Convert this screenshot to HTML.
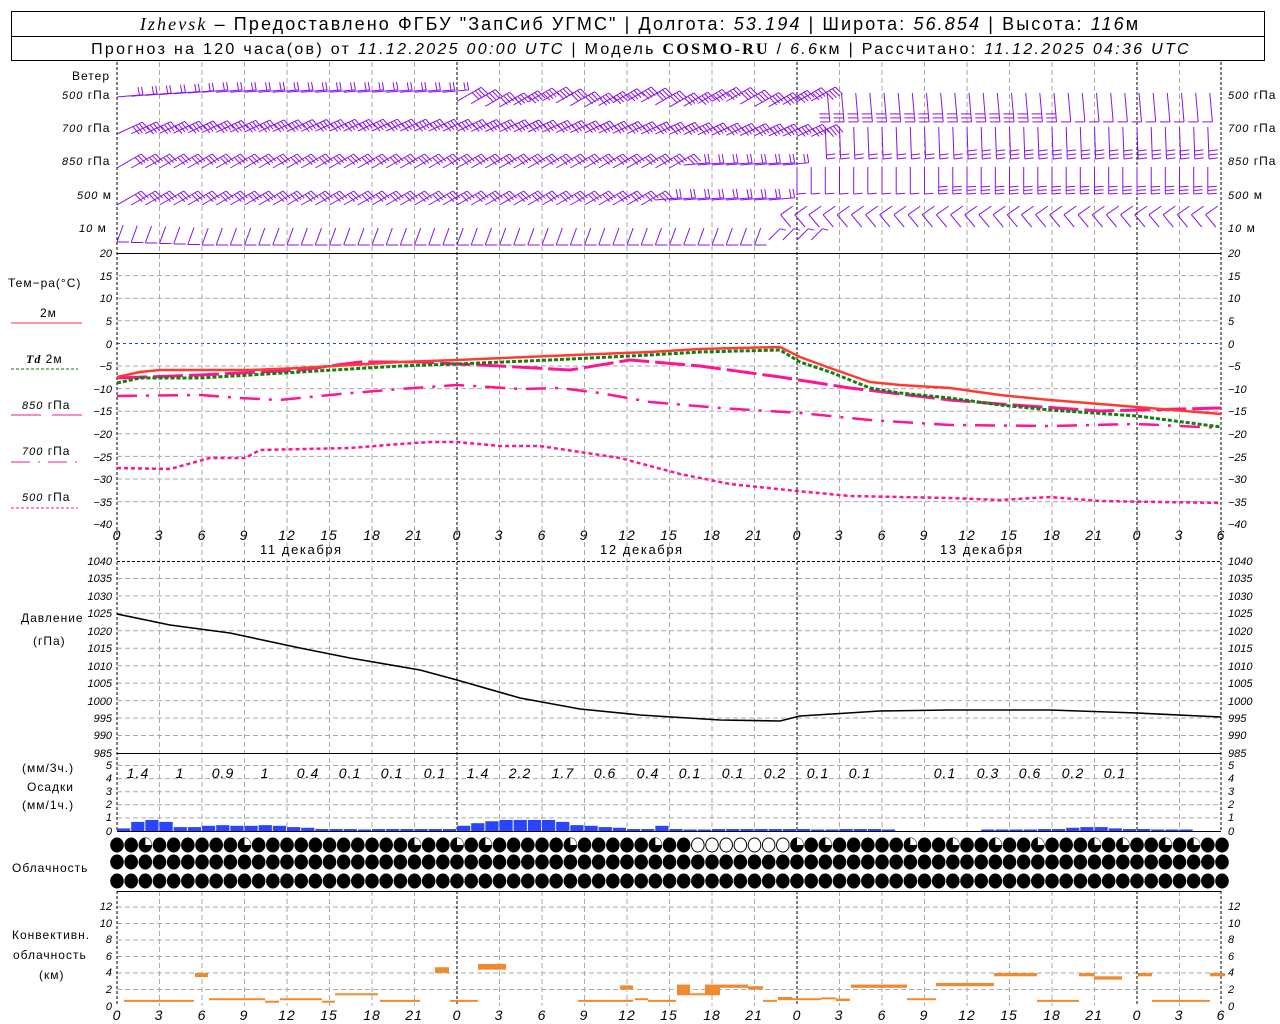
<!DOCTYPE html>
<html><head><meta charset="utf-8"><style>
html,body{margin:0;padding:0;background:#fff;}
svg{display:block;font-family:"Liberation Sans",sans-serif;}
.t{font-size:12px;fill:#000;letter-spacing:1px}
.n{font-size:11px;font-style:italic;fill:#000}
.nr{font-size:11px;font-style:italic;fill:#000;text-anchor:end}
.p{font-size:14px;font-style:italic;fill:#000;text-anchor:middle;letter-spacing:1px}
.x{font-size:14px;font-style:italic;fill:#000;text-anchor:middle;letter-spacing:1px}
</style></head><body>
<svg id="s" width="1280" height="1024" viewBox="0 0 1280 1024" xmlns="http://www.w3.org/2000/svg">
<rect x="11.5" y="11.5" width="1253" height="49" fill="none" stroke="#000"/>
<line x1="11" y1="36.5" x2="1265" y2="36.5" stroke="#000"/>
<text x="640" y="30" text-anchor="middle" style="font-size:18px;letter-spacing:2.1px"><tspan font-style="italic" font-family="Liberation Serif">Izhevsk</tspan> – Предоставлено ФГБУ "ЗапСиб УГМС" | Долгота: <tspan font-style="italic">53.194</tspan> | Широта: <tspan font-style="italic">56.854</tspan> | Высота: <tspan font-style="italic">116</tspan>м</text>
<text x="641" y="54" text-anchor="middle" style="font-size:16px;letter-spacing:2.3px">Прогноз на 120 часа(ов) от <tspan font-style="italic">11.12.2025 00:00 UTC</tspan>  | Модель <tspan font-weight="bold" font-family="Liberation Serif">COSMO-RU</tspan> / <tspan font-style="italic">6.6</tspan>км | Рассчитано: <tspan font-style="italic">11.12.2025 04:36 UTC</tspan></text>
<g id="g"></g>
<text class="t" x="72" y="80">Ветер</text>
<text class="t" x="62" y="99"><tspan font-style="italic" font-size="11">500</tspan> гПа</text>
<text class="t" x="62" y="132"><tspan font-style="italic" font-size="11">700</tspan> гПа</text>
<text class="t" x="62" y="165"><tspan font-style="italic" font-size="11">850</tspan> гПа</text>
<text class="t" x="77" y="199"><tspan font-style="italic" font-size="11">500</tspan> м</text>
<text class="t" x="79" y="232"><tspan font-style="italic" font-size="11">10</tspan>   м</text>
<text class="t" x="1228" y="99"><tspan font-style="italic" font-size="11">500</tspan> гПа</text>
<text class="t" x="1228" y="132"><tspan font-style="italic" font-size="11">700</tspan> гПа</text>
<text class="t" x="1228" y="165"><tspan font-style="italic" font-size="11">850</tspan> гПа</text>
<text class="t" x="1228" y="199"><tspan font-style="italic" font-size="11">500</tspan> м</text>
<text class="t" x="1228" y="232"><tspan font-style="italic" font-size="11">10</tspan>   м</text>
<text class="t" x="8" y="287">Тем−ра(°С)</text>
<text class="t" x="40" y="317">2м</text>
<line x1="11" y1="323" x2="82" y2="323" stroke="#ff3333"/>
<text class="t" x="26" y="363"><tspan font-style="italic" font-weight="bold" font-family="Liberation Serif">Td</tspan>  2м</text>
<line x1="11" y1="369" x2="78" y2="369" stroke="#107010" stroke-dasharray="3,2"/>
<text class="t" x="22" y="409"><tspan font-style="italic" font-size="11">850</tspan> гПа</text>
<line x1="11" y1="415" x2="41" y2="415" stroke="#ff1493"/><line x1="52" y1="415" x2="82" y2="415" stroke="#ff1493"/>
<text class="t" x="22" y="455"><tspan font-style="italic" font-size="11">700</tspan> гПа</text>
<line x1="11" y1="462" x2="78" y2="462" stroke="#ff1493" stroke-dasharray="19,8,2,8"/>
<text class="t" x="22" y="501"><tspan font-style="italic" font-size="11">500</tspan> гПа</text>
<line x1="11" y1="508" x2="78" y2="508" stroke="#ff1493" stroke-dasharray="3,2"/>
<text class="t" x="21" y="622">Давление</text>
<text class="t" x="33" y="645">(гПа)</text>
<text class="t" x="22" y="772">(мм/3ч.)</text>
<text class="t" x="27" y="791">Осадки</text>
<text class="t" x="22" y="809">(мм/1ч.)</text>
<text class="t" x="12" y="872">Облачность</text>
<text class="t" x="12" y="939">Конвективн.</text>
<text class="t" x="13" y="959">облачность</text>
<text class="t" x="39" y="979">(км)</text>
<text class="t" x="260" y="554" style="font-size:13px;letter-spacing:1.6px">11 декабря</text>
<text class="t" x="600" y="554" style="font-size:13px;letter-spacing:1.6px">12 декабря</text>
<text class="t" x="940" y="554" style="font-size:13px;letter-spacing:1.6px">13 декабря</text>
<g class="x">
<text x="117" y="540">0</text><text x="159" y="540">3</text><text x="202" y="540">6</text><text x="244" y="540">9</text><text x="287" y="540">12</text><text x="329" y="540">15</text><text x="372" y="540">18</text><text x="414" y="540">21</text><text x="457" y="540">0</text><text x="499" y="540">3</text><text x="542" y="540">6</text><text x="584" y="540">9</text><text x="627" y="540">12</text><text x="669" y="540">15</text><text x="712" y="540">18</text><text x="754" y="540">21</text><text x="797" y="540">0</text><text x="839" y="540">3</text><text x="882" y="540">6</text><text x="924" y="540">9</text><text x="967" y="540">12</text><text x="1009" y="540">15</text><text x="1052" y="540">18</text><text x="1094" y="540">21</text><text x="1137" y="540">0</text><text x="1179" y="540">3</text><text x="1221" y="540">6</text>
<text x="117" y="1020">0</text><text x="159" y="1020">3</text><text x="202" y="1020">6</text><text x="244" y="1020">9</text><text x="287" y="1020">12</text><text x="329" y="1020">15</text><text x="372" y="1020">18</text><text x="414" y="1020">21</text><text x="457" y="1020">0</text><text x="499" y="1020">3</text><text x="542" y="1020">6</text><text x="584" y="1020">9</text><text x="627" y="1020">12</text><text x="669" y="1020">15</text><text x="712" y="1020">18</text><text x="754" y="1020">21</text><text x="797" y="1020">0</text><text x="839" y="1020">3</text><text x="882" y="1020">6</text><text x="924" y="1020">9</text><text x="967" y="1020">12</text><text x="1009" y="1020">15</text><text x="1052" y="1020">18</text><text x="1094" y="1020">21</text><text x="1137" y="1020">0</text><text x="1179" y="1020">3</text><text x="1221" y="1020">6</text>
</g>
<g class="p">
<text x="138" y="778">1.4</text><text x="180" y="778">1</text><text x="223" y="778">0.9</text><text x="265" y="778">1</text><text x="308" y="778">0.4</text><text x="350" y="778">0.1</text><text x="392" y="778">0.1</text><text x="435" y="778">0.1</text><text x="478" y="778">1.4</text><text x="520" y="778">2.2</text><text x="563" y="778">1.7</text><text x="605" y="778">0.6</text><text x="648" y="778">0.4</text><text x="690" y="778">0.1</text><text x="733" y="778">0.1</text><text x="775" y="778">0.2</text><text x="818" y="778">0.1</text><text x="860" y="778">0.1</text><text x="945" y="778">0.1</text><text x="988" y="778">0.3</text><text x="1030" y="778">0.6</text><text x="1073" y="778">0.2</text><text x="1115" y="778">0.1</text>
</g>
<g class="nr">
<text x="112" y="257">20</text><text x="112" y="280">15</text><text x="112" y="302">10</text><text x="112" y="325">5</text><text x="112" y="348">0</text><text x="112" y="370">−5</text><text x="112" y="393">−10</text><text x="112" y="415">−15</text><text x="112" y="438">−20</text><text x="112" y="461">−25</text><text x="112" y="483">−30</text><text x="112" y="506">−35</text><text x="112" y="528">−40</text>
<text x="112" y="565">1040</text><text x="112" y="582">1035</text><text x="112" y="600">1030</text><text x="112" y="617">1025</text><text x="112" y="635">1020</text><text x="112" y="652">1015</text><text x="112" y="670">1010</text><text x="112" y="687">1005</text><text x="112" y="705">1000</text><text x="112" y="722">995</text><text x="112" y="739">990</text><text x="112" y="757">985</text>
<text x="112" y="769">5</text><text x="112" y="782">4</text><text x="112" y="795">3</text><text x="112" y="808">2</text><text x="112" y="821">1</text><text x="112" y="835">0</text>
<text x="112" y="910">12</text><text x="112" y="927">10</text><text x="112" y="943">8</text><text x="112" y="960">6</text><text x="112" y="976">4</text><text x="112" y="993">2</text><text x="112" y="1010">0</text>
</g>
<g class="n">
<text x="1228" y="257">20</text><text x="1228" y="280">15</text><text x="1228" y="302">10</text><text x="1228" y="325">5</text><text x="1228" y="348">0</text><text x="1228" y="370">−5</text><text x="1228" y="393">−10</text><text x="1228" y="415">−15</text><text x="1228" y="438">−20</text><text x="1228" y="461">−25</text><text x="1228" y="483">−30</text><text x="1228" y="506">−35</text><text x="1228" y="528">−40</text>
<text x="1228" y="565">1040</text><text x="1228" y="582">1035</text><text x="1228" y="600">1030</text><text x="1228" y="617">1025</text><text x="1228" y="635">1020</text><text x="1228" y="652">1015</text><text x="1228" y="670">1010</text><text x="1228" y="687">1005</text><text x="1228" y="705">1000</text><text x="1228" y="722">995</text><text x="1228" y="739">990</text><text x="1228" y="757">985</text>
<text x="1228" y="769">5</text><text x="1228" y="782">4</text><text x="1228" y="795">3</text><text x="1228" y="808">2</text><text x="1228" y="821">1</text><text x="1228" y="835">0</text>
<text x="1228" y="910">12</text><text x="1228" y="927">10</text><text x="1228" y="943">8</text><text x="1228" y="960">6</text><text x="1228" y="976">4</text><text x="1228" y="993">2</text><text x="1228" y="1010">0</text>
</g>
</svg>
<script>
(function(){
var g=document.getElementById('g'),o='';
function L(x1,y1,x2,y2,c,w,d){o+='<line x1="'+x1+'" y1="'+y1+'" x2="'+x2+'" y2="'+y2+'" stroke="'+c+'" stroke-width="'+(w||1)+'"'+(d?' stroke-dasharray="'+d+'"':'')+'/>';}
function X(h){return 117+h*14.1667;}
var i,y;
for(i=1;i<12;i++){y=253+i*22.6;if(i==4)continue;L(117,y,1221,y,'#aaa',1,'5,3');}
L(117,343.5,1221,343.5,'#2040ff',1,'3,3');
for(i=1;i<11;i++){y=561+i*17.45;L(117,y,1221,y,'#aaa',1,'5,3');}
for(i=1;i<6;i++){y=831-i*13.1;L(117,y,1221,y,'#aaa',1,'5,3');}
for(i=1;i<7;i++){y=1006-i*16.5;L(117,y,1221,y,'#aaa',1,'5,3');}
for(i=1;i<26;i++){var x=117+i*42.5;if(i%8==0)continue;L(x,62,x,831,'#aaa',1,'5,3');L(x,891,x,1006,'#aaa',1,'5,3');}
[117,457,797,1137,1221].forEach(function(x){L(x,62,x,831,'#000',1,'3,2');L(x,891,x,1006,'#000',1,'3,2');});
L(117,253.5,1221,253.5,'#000');L(117,561.5,1221,561.5,'#000',1,'3,2');
L(117,753.5,1221,753.5,'#000');L(117,831.5,1221,831.5,'#000');L(117,891.5,1221,891.5,'#000');
function P(pts,c,w,d){o+='<polyline fill="none" stroke="'+c+'" stroke-width="'+w+'"'+(d?' stroke-dasharray="'+d+'"':'')+' points="'+pts.join(' ')+'"/>';}
P(["117,396","200,395","240,398","280,400","340,394","400,389","457,385","520,389","560,388","600,393","650,402","720,408","800,413","870,420","950,425","1050,426","1137,424","1221,428"],'#ff1493',2.5,'20,9,3,9');
P(["117,468","170,469","210,458","245,458","260,450","350,448","400,444","430,442","457,442","500,446","540,446","620,458","680,474","730,484","797,491","850,496","950,498","1000,500","1050,497","1100,501","1221,503"],'#ff1493',2.5,'4,3');
P(["117,378","200,375","300,370","360,362","420,362","457,364","500,366","570,370","630,360","700,366","780,377","850,388","900,394","950,400","1000,404","1100,411","1221,408"],'#ff1493',3,'30,6');
P(["117,377","140,372","160,370","250,370","300,368","400,362","457,360","550,356","650,352","700,349","780,347","800,357","830,368","870,382","900,385","950,388","1000,395","1050,400","1100,404","1137,407","1221,414"],'#ff3a30',2.5);
P(["117,383","140,378","200,378","300,372","400,366","457,364","550,360","650,355","700,352","780,350","800,362","830,372","870,388","900,393","950,398","1000,405","1050,410","1137,416","1221,427"],'#108010',3,'4,2');
P(["117,614","170,625","230,633","300,648","350,658","420,670","457,680","520,698","580,709","640,715","720,720","780,721","800,716","880,711","950,710","1050,710","1137,713","1221,717"],'#000',1.6);
var pr=[.2,.7,.85,.7,.3,.3,.4,.45,.4,.4,.45,.4,.3,.25,.15,.15,.15,.05,.15,.15,.15,.15,.15,.15,.4,.6,.75,.85,.85,.85,.85,.7,.45,.4,.3,.25,.15,.15,.4,.15,.1,.1,.15,.15,.15,.15,.15,.15,.15,.1,.1,.15,.15,.15,.1,0,0,0,0,0,0,.05,.1,.1,.1,.15,.15,.25,.3,.3,.2,.15,.15,.1,.05,.05,0,0];
for(i=0;i<78;i++){if(pr[i]>0){var hh=Math.max(1.5,pr[i]*13);o+='<rect x="'+X(i)+'" y="'+(831-hh)+'" width="13.2" height="'+hh+'" fill="#2a45ff"/>';}}
var rows=[845,862,881];
for(var r=0;r<3;r++)for(i=0;i<79;i++){var cx=X(i),cy=rows[r],wh=(r==0&&i>=41&&i<=47);
 o+='<ellipse cx="'+cx+'" cy="'+cy+'" rx="6.3" ry="7" fill="'+(wh?'#fff':'#000')+'" stroke="#000" stroke-width="1"/>';
 if(r==0&&[2,9,21,24,26,32,38,48,50,56,59,62,65,69,71,74,76].indexOf(i)>=0)o+='<path d="M'+cx+','+cy+' L'+cx+','+(cy-7)+' A6.3,7 0 0 1 '+(cx+6.3)+','+cy+' Z" fill="#fff"/>';
}
var cv=[[124,194,.5,.5],[195,208,3.5,4],[209,265,.7,.7],[265,279,.4,.4],[280,322,.7,.7],[322,335,.4,.4],[335,378,1.3,1.3],[380,420,.5,.5],[435,449,4,4.7],[450,478,.5,.5],[478,506,4.4,5.1],[578,633,.5,.5],[620,633,2,2.5],[635,648,.7,.7],[648,676,.5,.5],[677,690,1.3,2.6],[690,705,1.3,1.3],[705,720,1.3,2.6],[720,748,2.2,2.6],[748,763,2,2.4],[763,777,.5,.5],[778,792,.7,1.1],[792,821,.7,.7],[821,836,.8,1],[836,850,.6,.9],[851,907,2.2,2.6],[907,936,.7,.7],[936,994,2.4,2.8],[994,1037,3.6,4],[1037,1079,.5,.5],[1079,1094,3.6,4],[1094,1122,3.2,3.6],[1138,1152,3.6,4],[1152,1210,.5,.5],[1210,1225,3.6,4]];
cv.forEach(function(c){var y1=1006-c[3]*8.25,y2=1006-c[2]*8.25,hh=Math.max(2,y2-y1);o+='<rect x="'+c[0]+'" y="'+(y2-hh)+'" width="'+(c[1]-c[0])+'" height="'+hh+'" fill="#f08a30"/>';});
var W='#8a10ee';
function B(x,y,a,len,rot,n,fl,sp){sp=sp||3.5;var r=a*Math.PI/180,dx=Math.cos(r),dy=-Math.sin(r),ex=x+dx*len,ey=y+dy*len;L(x.toFixed(1),y.toFixed(1),ex.toFixed(1),ey.toFixed(1),W);
 var fr=(a+rot)*Math.PI/180,fx=Math.cos(fr)*fl,fy=-Math.sin(fr)*fl;
 for(var k=0;k<n;k++){var px=ex-dx*k*sp,py=ey-dy*k*sp;L(px.toFixed(1),py.toFixed(1),(px+fx).toFixed(1),(py+fy).toFixed(1),W);}}
for(i=0;i<78;i++){var x=X(i);
 // 500 hPa
 if(i<24)B(x,97-Math.min(i,6)*0.8,5,26,95,2,8);
 else if(i<50)B(x,104+Math.sin(i)*3,30,28,-75,4,10);
 else B(x+2,93,-85,29,-95,i>66?1:3,10,4);
 // 700 hPa
 if(i<50)B(x,134-Math.sin(i/12)*3,25,28,-75,4,10);
 else B(x,127,-88,32,95,i<60?2:3,9,4);
 // 850 hPa
 if(i<40)B(x,168,30,28,-75,3,10);
 else if(i<48)B(x,165,5,26,95,2,9);
 else B(x,167,-90,27,95,i<58?1:3,9,3.5);
 // 500 m
 if(i<38)B(x,205,30,28,-75,3,10);
 else if(i<47)B(x,200,5,26,95,2,9);
 else B(x+8,227,130,16,-95,1,15);
 // 10 m
 if(i<46)B(x+12,245-Math.max(0,6-i)*0.5,180,12,-110,1,18);
 else if(i<50)B(x,240,45,16,-60,1,6);
}
g.innerHTML=o;
})();
</script>
</body></html>
